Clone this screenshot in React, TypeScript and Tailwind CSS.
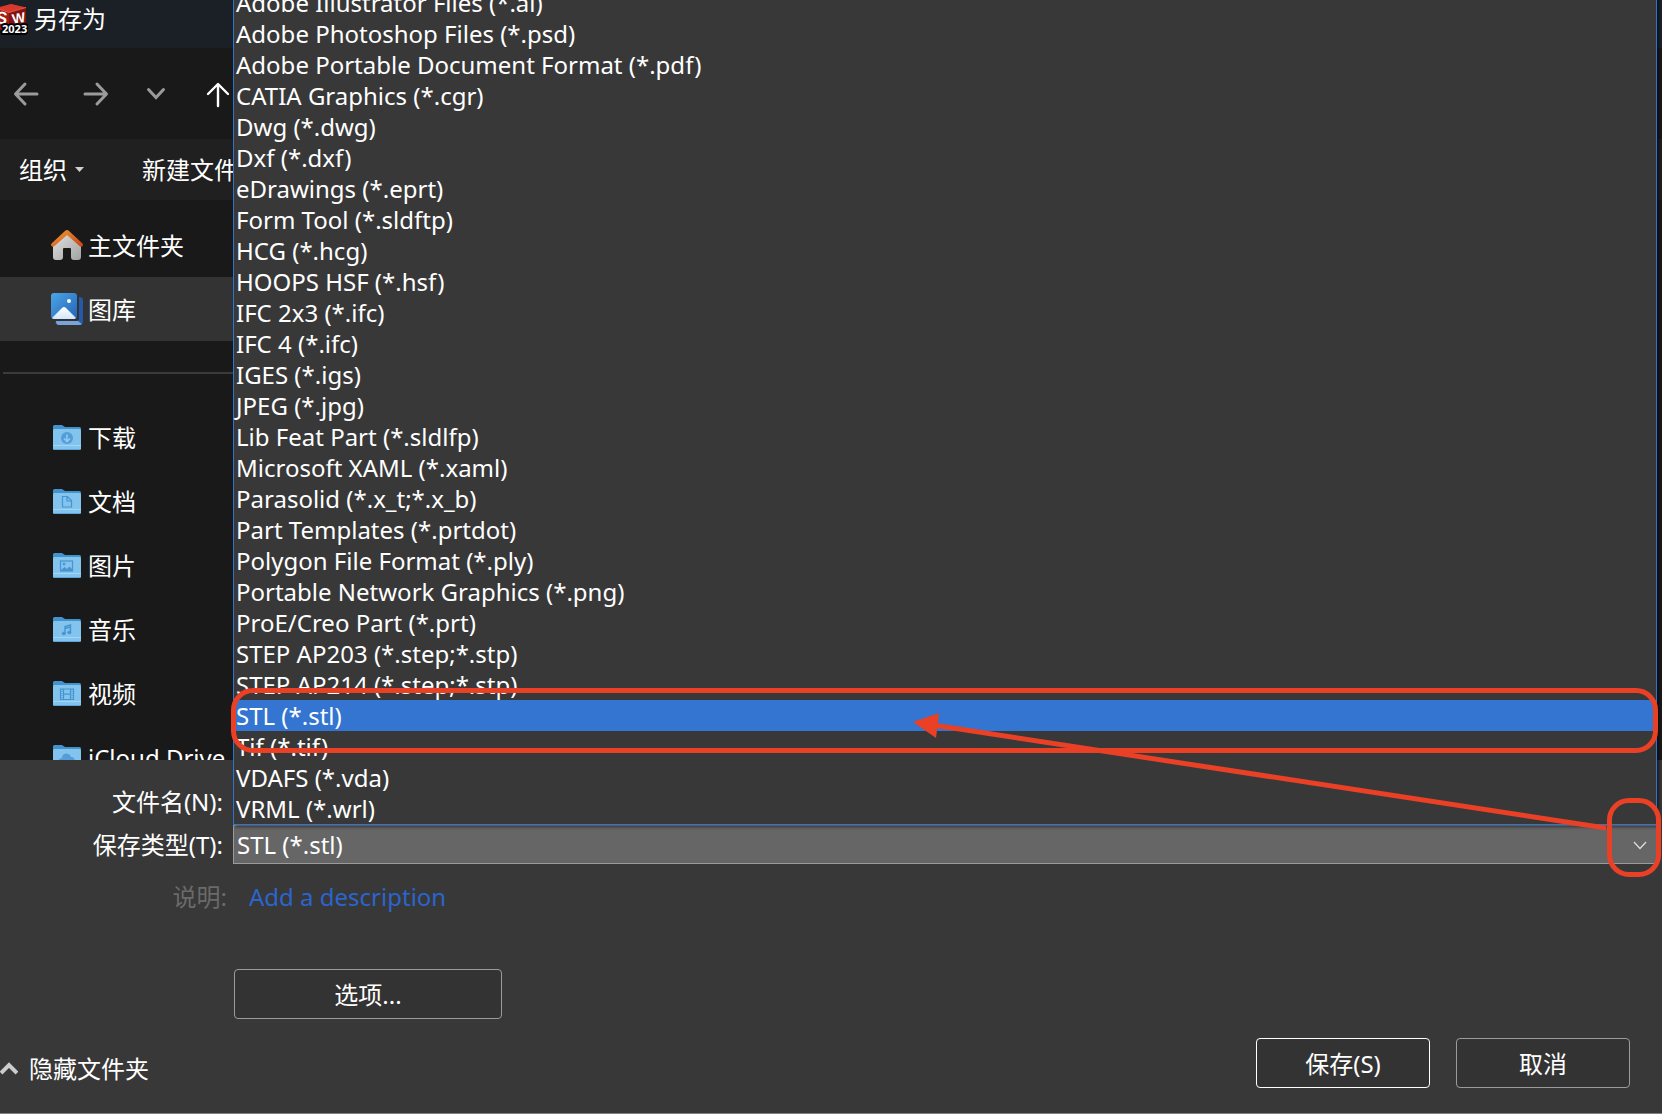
import { useState, type ReactNode } from 'react'

const FILE_TYPES = [
  'Adobe Illustrator Files (*.ai)',
  'Adobe Photoshop Files (*.psd)',
  'Adobe Portable Document Format (*.pdf)',
  'CATIA Graphics (*.cgr)',
  'Dwg (*.dwg)',
  'Dxf (*.dxf)',
  'eDrawings (*.eprt)',
  'Form Tool (*.sldftp)',
  'HCG (*.hcg)',
  'HOOPS HSF (*.hsf)',
  'IFC 2x3 (*.ifc)',
  'IFC 4 (*.ifc)',
  'IGES (*.igs)',
  'JPEG (*.jpg)',
  'Lib Feat Part (*.sldlfp)',
  'Microsoft XAML (*.xaml)',
  'Parasolid (*.x_t;*.x_b)',
  'Part Templates (*.prtdot)',
  'Polygon File Format (*.ply)',
  'Portable Network Graphics (*.png)',
  'ProE/Creo Part (*.prt)',
  'STEP AP203 (*.step;*.stp)',
  'STEP AP214 (*.step;*.stp)',
  'STL (*.stl)',
  'Tif (*.tif)',
  'VDAFS (*.vda)',
  'VRML (*.wrl)',
]

function AppIcon() {
  return (
    <svg width="28" height="36" viewBox="0 0 28 36" aria-hidden="true">
      <path d="M-4 8 11 4 26 7.500V25L9 32-4 28z" fill="#a01c18" />
      <path d="M-4 8 11 4 26 7.500 9 12.500z" fill="#d8392f" />
      <path d="M9 12.500 26 7.500V25L9 32z" fill="#84120f" />
      <path d="M-4 8 9 12.500 26 7.500" fill="none" stroke="#e4594c" strokeWidth="1" />
      <text x="-4" y="24" fontFamily="Liberation Sans" fontWeight="700" fontSize="17" fill="#fff" transform="rotate(8 4 18)">S</text>
      <text x="12" y="23" fontFamily="Liberation Sans" fontWeight="700" fontSize="14" fill="#fff" transform="rotate(-10 18 18)">W</text>
      <text x="2" y="33" fontFamily="Noto Sans" fontWeight="700" fontSize="11" fill="#fff" stroke="#000" strokeWidth="4" paintOrder="stroke" strokeLinejoin="round">2023</text>
    </svg>
  )
}

function HomeIcon() {
  return (
    <svg width="32" height="32" viewBox="0 0 32 32" aria-hidden="true">
      <defs>
        <linearGradient id="wall" x1="0" y1="0" x2="1" y2="1">
          <stop offset="0" stopColor="#e2e2e2" />
          <stop offset="1" stopColor="#a2a2a2" />
        </linearGradient>
        <linearGradient id="roof" x1="0" y1="0" x2="1" y2="1">
          <stop offset="0" stopColor="#f0a030" />
          <stop offset="1" stopColor="#c8401c" />
        </linearGradient>
      </defs>
      <path d="M16 4 2 17v11q0 3 3 3h4q3 0 3-3v-8q0-1 1-1h6q1 0 1 1v8q0 3 3 3h4q3 0 3-3V17z" fill="url(#wall)" />
      <path d="M14 2Q16 0 18 2L31 14Q33 16 31 17.500Q30 18 28.500 17L16 6 3.500 17Q2 18 1 17.500-1 16 1 14z" fill="url(#roof)" />
    </svg>
  )
}

function GalleryIcon() {
  return (
    <svg width="32" height="34" viewBox="0 0 32 34" aria-hidden="true">
      <defs>
        <linearGradient id="sky" x1="0" y1="0" x2="1" y2="1">
          <stop offset="0" stopColor="#4aa6e6" />
          <stop offset="1" stopColor="#2563b8" />
        </linearGradient>
        <linearGradient id="hill" x1="0" y1="0" x2="0" y2="1">
          <stop offset="0" stopColor="#fff" />
          <stop offset="1" stopColor="#d3e6fa" />
        </linearGradient>
      </defs>
      <path d="M28 5q4 0 4 3v21q0 4-4 4H8q-3 0-4-3l23-2z" fill="#2459a8" />
      <path d="M5 29h22l4 3q-1 1-3 1H8q-3 0-3-4z" fill="#7aa4d8" />
      <rect x="0" y="1" width="28" height="28" rx="3" fill="#333333" />
      <rect x="0" y="1" width="26" height="26" rx="3" fill="url(#sky)" />
      <path d="M1 26 11 16q2-2 4 0L25 26q-1 1-2 1H3q-1 0-2-1z" fill="url(#hill)" />
      <circle cx="18" cy="9" r="2" fill="#fff" />
    </svg>
  )
}

function FolderIcon({ children }: { children: ReactNode }) {
  return (
    <svg width="32" height="28" viewBox="0 0 32 28" fill="none" stroke="#4794d0" strokeWidth="1" aria-hidden="true">
      <path d="M2 3.500Q2 2 3.500 2H11l3 2H28.500Q30 4 30 5.500V20H2z" fill="#4492cc" stroke="none" />
      <path d="M2 7.500Q2 6 3.500 6H28.500Q30 6 30 7.500V25.500Q30 27 28.500 27H3.500Q2 27 2 25.500z" fill="#82c4ee" stroke="none" />
      <path d="M2 22.500H30" stroke="#a3d6f4" />
      <path d="M3 26.500H29" stroke="#5fa6d8" />
      {children}
    </svg>
  )
}

const FOLDERS: { label: string; glyph: ReactNode }[] = [
  {
    label: '下载',
    glyph: (
      <>
        <circle cx="16" cy="15" r="6" fill="#559dd8" stroke="none" />
        <path d="M16 11.500V18M13 15.500 16 18.500 19 15.500" stroke="#8fcbf2" strokeWidth="1.600" />
      </>
    ),
  },
  { label: '文档', glyph: <path d="M11.500 9.500H16.500L20.500 13.500V20H11.500zM16 9.500V14H20.500" strokeWidth="1.200" /> },
  {
    label: '图片',
    glyph: (
      <>
        <rect x="9.500" y="10" width="12" height="10" strokeWidth="1.200" />
        <circle cx="13" cy="13" r="1" fill="#4794d0" />
        <path d="M10 19 13.500 16 16 18 18.500 15.500 21 18V20H10z" fill="#4794d0" stroke="none" />
      </>
    ),
  },
  {
    label: '音乐',
    glyph: (
      <>
        <path d="M14 18.500V11.500L19.500 10V17.500M14 13.500 19.500 12" strokeWidth="1.400" />
        <ellipse cx="12.800" cy="18.500" rx="1.600" ry="1.300" fill="#4794d0" />
        <ellipse cx="18.300" cy="17.500" rx="1.600" ry="1.300" fill="#4794d0" />
      </>
    ),
  },
  {
    label: '视频',
    glyph: (
      <>
        <path d="M9.500 10H22.500V20.500H9.500zM12.500 10V20.500M19.500 10V20.500M12.500 15.200H19.500" strokeWidth="1.200" />
        <path d="M11 10V20.500M21 10V20.500" strokeDasharray="1 1" />
      </>
    ),
  },
  { label: 'iCloud Drive', glyph: <path d="M8 20q-2-4 3-5 0-4 4-4.500 4 0 5 3.500 4 0 3.500 4 0 2-2 3z" fill="#559dd8" stroke="none" /> },
]

export default function App() {
  const [type, setType] = useState('STL (*.stl)')
  const button =
    'flex h-[50px] items-center justify-center rounded-[4px] border bg-[#333333]'

  return (
    <div className="flex h-screen flex-col overflow-hidden bg-[#191919] font-['Noto_Sans','Noto_Sans_CJK_SC',sans-serif] text-[24px] leading-[31px] text-white">
      <header className="flex h-12 shrink-0 items-center gap-[6px] bg-gradient-to-r from-[#1b2026] to-[#1b222c] pb-3">
        <AppIcon />
        <h1>另存为</h1>
      </header>

      <nav className="flex h-[91px] shrink-0 items-center gap-9 pl-[12px] text-[#9b9b9b]">
        <button aria-label="后退" className="w-[28px]">
          <svg width="28" height="28" viewBox="0 0 28 28" fill="none" stroke="currentColor" strokeWidth="3" strokeLinecap="round" strokeLinejoin="round">
            <path d="M25 14H4M13 4 3.500 14 13 24" />
          </svg>
        </button>
        <button aria-label="前进" className="ml-[6px] w-[28px]">
          <svg width="28" height="28" viewBox="0 0 28 28" fill="none" stroke="currentColor" strokeWidth="3" strokeLinecap="round" strokeLinejoin="round">
            <path d="M3 14H24M15 4 24.500 14 15 24" />
          </svg>
        </button>
        <button aria-label="最近的位置" className="w-[20px]">
          <svg width="20" height="28" viewBox="0 0 20 28" fill="none" stroke="currentColor" strokeWidth="3" strokeLinecap="round">
            <path d="M2.500 9.500 10 17.500 17.500 9.500" />
          </svg>
        </button>
        <button aria-label="上移" className="w-[28px] text-white">
          <svg width="28" height="28" viewBox="0 0 28 28" fill="none" stroke="currentColor" strokeWidth="2.400" strokeLinecap="round" strokeLinejoin="round">
            <path d="M16 26V4.500M6 14 16 4 26 14" />
          </svg>
        </button>
      </nav>

      <div className="flex h-[61px] shrink-0 items-center gap-[58px] bg-[#202020] pl-[19px]">
        <button className="flex items-center gap-2">
          组织
          <svg width="9" height="5" viewBox="0 0 9 5" aria-hidden="true">
            <path d="M0 0H9L4.500 5z" fill="#d0d0d0" />
          </svg>
        </button>
        <button>新建文件夹</button>
      </div>

      <aside className="min-h-0 w-[240px] flex-1 overflow-hidden pt-[13px]">
        <a href="#home" className="flex h-16 items-center gap-[5px] pl-[51px]">
          <HomeIcon />
          主文件夹
        </a>
        <a href="#gallery" className="flex h-16 items-center gap-[5px] bg-[#333333] pl-[51px]">
          <GalleryIcon />
          图库
        </a>
        <hr className="mt-[31px] mb-[31px] ml-[3px] border-t-2 border-[#3b3b3b]" />
        {FOLDERS.map((f) => (
          <a key={f.label} href="#folder" className="flex h-16 items-center gap-[5px] pl-[51px] whitespace-nowrap">
            <FolderIcon>{f.glyph}</FolderIcon>
            {f.label}
          </a>
        ))}
      </aside>

      <main className="flex h-[354px] shrink-0 flex-col border-b border-[#808080] bg-[#383838] pt-[22px]">
        <div className="grid grid-cols-[233px_1fr] pr-[5px]">
          <label htmlFor="filename" className="pt-1 pr-[10px] text-right">
            文件名(N):
          </label>
          <input id="filename" className="mb-1 h-[39px] border border-[#9b9b9b] bg-[#383838] px-1" />

          <label htmlFor="filetype" className="pt-1 pr-[10px] text-right">
            保存类型(T):
          </label>
          <div className="relative">
            <select
              id="filetype"
              value={type}
              onChange={(e) => setType(e.target.value)}
              className="block h-[39px] w-full appearance-none border border-[#9b9b9b] bg-[#666666] px-[3px]"
            >
              {FILE_TYPES.map((t) => (
                <option key={t}>{t}</option>
              ))}
            </select>
            <svg className="pointer-events-none absolute top-[16px] right-[10px]" width="14" height="9" viewBox="0 0 14 9" fill="none" stroke="#e0e0e0" strokeWidth="1.200" aria-hidden="true">
              <path d="M1 1 7 7.500 13 1" />
            </svg>

            <ul role="listbox" aria-label="保存类型" className="absolute inset-x-0 bottom-full border border-[#2f74d0] bg-[#383838] shadow-[2px_2px_3px_rgba(0,0,0,0.5)]">
              {FILE_TYPES.map((t) => (
                <li
                  key={t}
                  role="option"
                  aria-selected={t === type}
                  onClick={() => setType(t)}
                  className="h-[31px] px-[2px] whitespace-nowrap aria-selected:bg-[#3375d0]"
                >
                  {t}
                </li>
              ))}
            </ul>

            <div className="pointer-events-none absolute right-[-1px] bottom-[111px] left-[-2px] h-[65px] rounded-[22px] border-[5px] border-[#ea4025]" />
            <svg className="pointer-events-none absolute top-[-113px] right-[51px]" width="693" height="120" viewBox="0 0 693 120" aria-hidden="true">
              <path d="M20 13 693 116" stroke="#ea4025" strokeWidth="5" />
              <path d="M0 10 26 1 23 26z" fill="#ea4025" />
            </svg>
            <div className="pointer-events-none absolute top-[-27px] right-[-4px] h-[79px] w-[54px] rounded-[22px] border-[5px] border-[#ea4025]" />
          </div>

          <label htmlFor="description" className="pt-[17px] pr-[6px] text-right text-[#6a6a6a]">
            说明:
          </label>
          <input
            id="description"
            placeholder="Add a description"
            className="mt-[17px] h-[31px] bg-transparent pl-4 placeholder:text-[#2b65cc]"
          />
        </div>

        <button className={`${button} mt-[57px] ml-[234px] w-[268px] shrink-0 border-[#9b9b9b]`}>选项...</button>

        <footer className="mt-[19px] flex items-center pr-8">
          <button className="mt-[10px] flex items-center gap-[11px]">
            <svg width="18" height="14" viewBox="0 0 18 14" fill="none" stroke="#cccccc" strokeWidth="4" aria-hidden="true">
              <path d="M1 12 9 4 17 12" />
            </svg>
            隐藏文件夹
          </button>
          <button className={`${button} ml-auto w-[174px] border-white`}>保存(S)</button>
          <button className={`${button} ml-[26px] w-[174px] border-[#9b9b9b]`}>取消</button>
        </footer>
      </main>
    </div>
  )
}
